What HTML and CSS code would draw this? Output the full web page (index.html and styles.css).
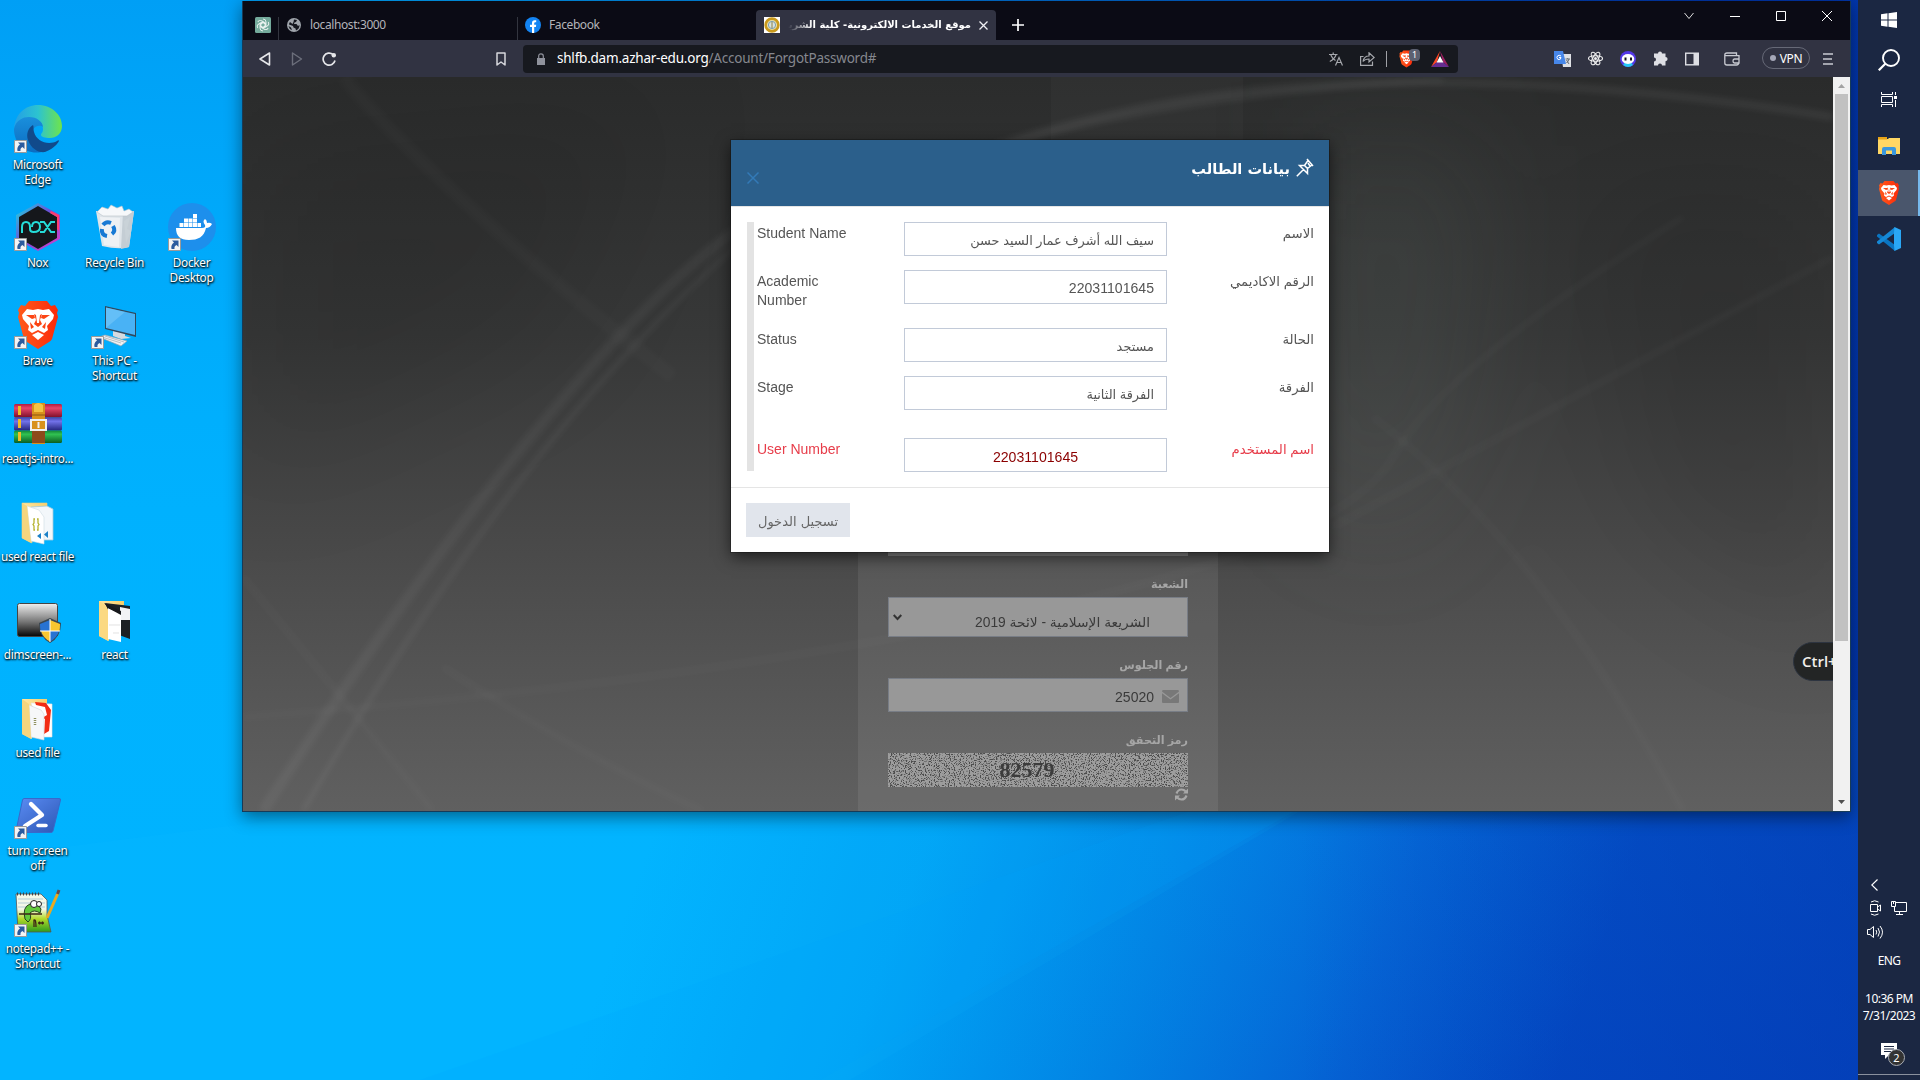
FILE: index.html
```html
<!DOCTYPE html>
<html lang="en">
<head>
<meta charset="utf-8">
<title>Desktop</title>
<link rel="stylesheet" href="styles.css">
</head>
<body>
<svg class="defs" width="0" height="0" aria-hidden="true">
  <defs>
    <linearGradient id="braveGrad" x1="0" x2="1"><stop offset="0" stop-color="#ff5a1c"/><stop offset="1" stop-color="#fb2a0a"/></linearGradient>
    <linearGradient id="folderGrad" x1="0" x2="1"><stop offset="0" stop-color="#ffe7a3"/><stop offset="1" stop-color="#f7cf6b"/></linearGradient>
    <symbol id="brave" viewBox="0 0 48 48">
      <path fill="url(#braveGrad)" d="M15 0H33L37 5 41 4 44 9 43 12 44 16 38 38Q37 40 35 41L24 48 13 41Q11 40 10 38L4 16 5 12 4 9 7 4 11 5Z"/>
      <path fill="#fff" d="M13 8 19 9 24 8 29 9 35 8 40 14 39 18 33 25 34 29 30 32 24 29 18 32 14 29 15 25 9 18 8 14ZM24 31 30 34 24 39 18 34Z"/>
      <path fill="#fc4413" d="M12 14 20 14 21 17 18 18ZM36 14 28 14 27 17 30 18ZM20 13 22 19 20 23 24 26 28 23 26 19 28 13 26 14 25 22H23L22 14ZM16 21 20 26 17 28ZM32 21 28 26 31 28Z"/>
    </symbol>
    <symbol id="shortcut" viewBox="0 0 13 13">
      <path fill="#f4f4f4" stroke="#9a9a9a" d="M.5.5H12.5V12.5H.5Z"/>
      <path fill="#2b5b9e" d="M4 2.500H10.500V9L8.500 7Q6 8 6.500 11H3.500Q2.500 7 6 4.500Z"/>
    </symbol>
  </defs>
</svg>

<svg class="wallpaper" viewBox="0 0 1920 1080" preserveAspectRatio="none" aria-hidden="true">
  <defs>
    <linearGradient id="wallBase" gradientUnits="userSpaceOnUse" x1="700" y1="700" x2="1580" y2="1010">
      <stop offset="0" stop-color="#00b4ff"/><stop offset=".28" stop-color="#00a4f6"/><stop offset=".55" stop-color="#0282e3"/><stop offset=".78" stop-color="#0562d4"/><stop offset="1" stop-color="#044bc6"/>
    </linearGradient>
    <linearGradient id="wallLeft" x1="0" y1="0" x2="0" y2="1"><stop offset="0" stop-color="#0098f2" stop-opacity=".75"/><stop offset=".5" stop-color="#00a8fb" stop-opacity=".2"/><stop offset="1" stop-color="#00a8fb" stop-opacity="0"/></linearGradient>
    <linearGradient id="wallTop" x1="0" x2="1"><stop offset=".2" stop-color="#0037a8" stop-opacity="0"/><stop offset=".9" stop-color="#0037a8"/></linearGradient>
    <linearGradient id="wallEnd" x1="0" x2="1"><stop offset="0" stop-color="#0030a8" stop-opacity="0"/><stop offset="1" stop-color="#0334ac" stop-opacity=".55"/></linearGradient>
  </defs>
  <path fill="url(#wallBase)" d="M0 0H1920V1080H0Z"/>
  <path fill="url(#wallLeft)" d="M0 0H1920V1080H0Z"/>
  <path fill="url(#wallTop)" d="M0 0H1920V700H0Z"/>
  <path fill="#1cc0ff" opacity=".08" d="M0 855 1300 690 1300 811 850 1080 0 1080Z"/>
  <path fill="#00a6ff" opacity=".14" d="M820 1080 1295 811H1190L420 1080Z"/>
  <path fill="url(#wallEnd)" d="M1300 0H1920V1080H1300Z"/>
</svg>

<main class="desktop-icons">
  <div class="shortcut c1 r1">
    <div class="art">
      <svg viewBox="0 0 48 48"><defs><linearGradient id="e1" x1="0" x2="1"><stop offset="0" stop-color="#249fe6"/><stop offset=".5" stop-color="#2cc3d0"/><stop offset="1" stop-color="#70e44a"/></linearGradient><linearGradient id="e2" x1="0" y1="0" x2="0" y2="1"><stop offset="0" stop-color="#1a8fdc"/><stop offset="1" stop-color="#0b6cc0"/></linearGradient></defs>
        <path fill="url(#e1)" d="M0 24C1 9 11 0 24 0 38 0 48 10 48 21 48 29 42 33 36 33 31 33 27 32 27 30 27 28 29 28 29 24 29 18 23 13 15 13 7 13 1 18 0 24Z"/>
        <path fill="url(#e2)" d="M0 24C2 15 9 12 15 12 23 12 29 17 29 22 27 20 21 20 19 25 15 35 24 45 31 46 14 52 0 40 0 24Z"/>
        <path fill="#114a8b" d="M19 20C14 23 12 29 14 35 17 44 25 48 31 47 37 45 43 40 45 36 45 35 44 35 43 36 34 41 22 36 20 27 19 24 20 22 19 20Z"/></svg>
      <svg class="arrow"><use href="#shortcut"/></svg>
    </div>
    <span>Microsoft<br>Edge</span>
  </div>
  <div class="shortcut c1 r2">
    <div class="art">
      <svg viewBox="0 0 48 48"><defs><linearGradient id="n1" x1="0" y1="0" x2="1" y2="1"><stop offset="0" stop-color="#18e0e0"/><stop offset=".45" stop-color="#6b52d8"/><stop offset="1" stop-color="#e239c8"/></linearGradient></defs>
        <path fill="url(#n1)" d="M24 0 46 12V36L24 48 2 36V12Z"/><path fill="#15171b" d="M24 3 43 14V35L24 46 5 35V14Z"/><path fill="#ff3c6e" d="M37 8 45 12V28L43 26V14L36 10Z"/>
        <path fill="none" stroke="#25dcd8" stroke-width="2" d="M8 30V24Q8 19 12 19 16 19 16 24V26Q16 29 19.500 29 26 29 26 24 26 19 22 19 18 19 18 24M26 19H30L37 29H41M41 19H37L30 29H26"/></svg>
      <svg class="arrow"><use href="#shortcut"/></svg>
    </div>
    <span>Nox</span>
  </div>
  <div class="shortcut c2 r2">
    <div class="art">
      <svg viewBox="0 0 48 48"><path fill="#dfe5ea" d="M5 8 43 8 38 44Q28 47 11 43Z"/><path fill="#c4cdd4" d="M32 9 43 8 38 44 30 46Z"/><path fill="#f6f8fa" stroke="#b9c1c8" stroke-width=".6" d="M6 9 11 4 17 6 20 2 26 5 31 3 33 8 38 6 42 9 36 13H12Z"/><path fill="#eef1f4" d="M9 14 29 15 28 44 13 42Z"/><path fill="#c9d2d8" d="M33 18 39 14 36 26 40 28 35 40Z"/>
        <g fill="none" stroke="#1779d4" stroke-width="4"><path d="M12 22Q15 18 20 20M22 23Q25 28 21 31M16 33Q10 32 11 26"/></g></svg>
    </div>
    <span>Recycle Bin</span>
  </div>
  <div class="shortcut c3 r2">
    <div class="art">
      <svg viewBox="0 0 48 48"><circle cx="24" cy="24" r="24" fill="#1d8fec"/><path fill="#fff" d="M8 25H34Q38 25 37 22 34 18 37 16 39 17 39 20 42 19 44 21 42 25 38 25C36 34 30 37 21 37 12 37 8 33 8 25Z"/><g fill="#fff"><path d="M11.500 20h4v4h-4zM16 20h4v4h-4zM20.500 20h4v4h-4zM25 20h4v4h-4zM29.500 20h3.500v4h-3.500zM16 15.500h4v4h-4zM20.500 15.500h4v4h-4zM25 15.500h4v4h-4zM25 11h4v4h-4z"/></g></svg>
      <svg class="arrow"><use href="#shortcut"/></svg>
    </div>
    <span>Docker<br>Desktop</span>
  </div>
  <div class="shortcut c1 r3">
    <div class="art"><svg><use href="#brave"/></svg><svg class="arrow"><use href="#shortcut"/></svg></div>
    <span>Brave</span>
  </div>
  <div class="shortcut c2 r3">
    <div class="art">
      <svg viewBox="0 0 48 48"><path fill="#d5dbe0" d="M22 30 34 32V35L40 37 30 38 22 35Z"/><path fill="#31485c" d="M14 5 45 12V36L14 28Z"/><path fill="#49b2f5" d="M15 6.500 44 13V34L15 27Z"/><path fill="#7fcbfa" d="M15 27V6.500L34 11Z" opacity=".5"/><path fill="#eef1f3" stroke="#9aa3aa" stroke-width=".7" d="M8 36 14 34 36 40 30 45Z"/><path stroke="#a9b1b7" stroke-width=".8" d="M11 36 30 42M14 35 33 41"/></svg>
      <svg class="arrow"><use href="#shortcut"/></svg>
    </div>
    <span>This PC -<br>Shortcut</span>
  </div>
  <div class="shortcut c1 r4">
    <div class="art">
      <svg viewBox="0 0 48 48"><defs><linearGradient id="w1" x1="0" y1="0" x2="0" y2="1"><stop offset="0" stop-color="#b01c40"/><stop offset=".3" stop-color="#e8466a"/><stop offset="1" stop-color="#7c0e2a"/></linearGradient><linearGradient id="w2" x1="0" y1="0" x2="0" y2="1"><stop offset="0" stop-color="#4444b0"/><stop offset=".3" stop-color="#7272e8"/><stop offset="1" stop-color="#25257c"/></linearGradient><linearGradient id="w3" x1="0" y1="0" x2="0" y2="1"><stop offset="0" stop-color="#128536"/><stop offset=".3" stop-color="#31c252"/><stop offset="1" stop-color="#0b5e24"/></linearGradient></defs>
        <rect y="5" width="48" height="13.500" rx="1.500" fill="url(#w1)"/><rect y="18.500" width="48" height="13" rx="1.500" fill="url(#w2)"/><rect y="31.500" width="48" height="12.500" rx="1.500" fill="url(#w3)"/>
        <path fill="#f2bc25" d="M4 7H7V16H4ZM4 20H7V29H4ZM4 33H7V42H4Z"/><path fill="#d8911c" d="M18 4H31V45H18Z"/><path fill="#8d4a1b" d="M18 31H31V44H18Z"/><path fill="#f4c343" d="M20 6Q24 2 29 6V13H20Z"/><path stroke="#8a5710" d="M18 16H31"/><path fill="none" stroke="#f0f0f0" stroke-width="2" d="M17 21H32V31H17ZM24.500 23V29"/></svg>
    </div>
    <span>reactjs-intro...</span>
  </div>
  <div class="shortcut c1 r5">
    <div class="art">
      <svg viewBox="0 0 48 48"><path fill="url(#folderGrad)" stroke="#e8cd83" stroke-width=".6" d="M8 6H33V10L18 12V46L8 41Z"/><path fill="#f3f7fa" stroke="#9fc8dc" stroke-width=".8" d="M17 10 33 9 39 12V43H28Z"/><path fill="#fff" stroke="#cfdbe2" stroke-width=".6" d="M13 9 25 13 30 20V47L17 44Z"/><path fill="#f5d57e" d="M8 6 13 9 17 46 8 41Z"/><path fill="none" stroke="#b5b32e" stroke-width="1.300" d="M21 22H20V26L19 27.500 20 29V33H21M23 22H24V26L25 27.500 24 29V33H23"/><path fill="#1b81c8" d="M27 36V42L23 39ZM34 34V41L30 37.500Z"/></svg>
    </div>
    <span>used react file</span>
  </div>
  <div class="shortcut c1 r6">
    <div class="art">
      <svg viewBox="0 0 48 48"><defs><linearGradient id="d1" x1="0" y1="0" x2="0" y2="1"><stop offset="0" stop-color="#efefef"/><stop offset=".55" stop-color="#777"/><stop offset="1" stop-color="#050505"/></linearGradient></defs>
        <rect x="3.500" y="8.500" width="40" height="33" rx="2" fill="url(#d1)" stroke="#444"/><path fill="#3a4650" d="M36 23 47 28Q47 42 36 48 25 42 25 28Z"/><path fill="#2873d2" d="M36 25V36H26.500Q26 33 26 29ZM36 36H45Q43 43 36 46.500Z"/><path fill="#f8c62f" d="M36 25 46 29Q46 33 45.500 36H36ZM27 36H36V46.500Q29 43 27 36Z"/><path stroke="#fff" d="M36 24V47M26 36H46"/></svg>
    </div>
    <span>dimscreen-...</span>
  </div>
  <div class="shortcut c2 r6">
    <div class="art">
      <svg viewBox="0 0 48 48"><path fill="url(#folderGrad)" d="M8 6H33V10L18 12V46L8 41Z"/><path fill="#1c1f23" d="M14 8 39 11V44L28 40Z"/><path fill="#f2f3f5" d="M29 12 39 14V25H29Z"/><path fill="#fff" d="M17 13 30 19V47L17 44Z"/><path fill="#17191c" d="M13 8 30 16V20L17 13Z"/><path fill="#fbd982" d="M8 6 13 9 17 15V46L8 41Z"/><path stroke="#d5d5d5" d="M18 30H29M22 38H28" stroke-width=".7"/></svg>
    </div>
    <span>react</span>
  </div>
  <div class="shortcut c1 r7">
    <div class="art">
      <svg viewBox="0 0 48 48"><path fill="url(#folderGrad)" d="M8 6H33V10L18 12V46L8 41Z"/><path fill="#fff" stroke="#e1e1e1" stroke-width=".6" d="M17 10 38 11V44H28Z"/><path fill="#f22c14" d="M21 9 32 10 37 17 35 38 30 41 31 26 28 25 33 22 31 14 22 12Z"/><path fill="#f6f7f9" stroke="#d7d7d7" stroke-width=".6" d="M15 12 27 17 30 21V47L17 44Z"/><path fill="#f5d57e" d="M8 6 15 11 17 46 8 41Z"/><path stroke="#8f9160" stroke-width="2.500" stroke-dasharray="1 1" d="M21 25V33"/></svg>
    </div>
    <span>used file</span>
  </div>
  <div class="shortcut c1 r8">
    <div class="art">
      <svg viewBox="0 0 48 48"><defs><linearGradient id="p1" x1="0" y1="0" x2="1" y2="1"><stop offset="0" stop-color="#5b8df4"/><stop offset="1" stop-color="#2c56b4"/></linearGradient></defs><path fill="url(#p1)" stroke="#3869cb" d="M10 7.500H45Q47 7.500 46.500 9L39 40Q38.500 41.500 37 41.500H3Q1.500 41.500 2 40L8.500 9Q9 7.500 10 7.500Z"/><path fill="none" stroke="#fff" stroke-width="4.300" stroke-linecap="round" stroke-linejoin="round" d="M17 13 28 24 11 35"/><path stroke="#fff" stroke-width="3.500" stroke-linecap="round" d="M24 34.500H32"/></svg>
      <svg class="arrow"><use href="#shortcut"/></svg>
    </div>
    <span>turn screen<br>off</span>
  </div>
  <div class="shortcut c1 r9">
    <div class="art">
      <svg viewBox="0 0 48 48"><defs><linearGradient id="np" x1="0" y1="0" x2="0" y2="1"><stop offset=".4" stop-color="#f4f8e8"/><stop offset=".65" stop-color="#b3d92a"/><stop offset="1" stop-color="#2e9b1c"/></linearGradient></defs><path fill="url(#np)" stroke="#555" stroke-width=".8" d="M2 5H27L33 11V26L37 43 4 43Z"/><path stroke="#444" stroke-width="3" stroke-dasharray="1 2" d="M3 5H26"/><path stroke="#9bbccb" stroke-width=".7" d="M4 10H29M4 14H31M4 18H31"/><path fill="#62c93c" stroke="#26401e" d="M11 30Q8 18 16 15 23 13 27 20L26 24Q20 20 16 24 18 30 14 33Z"/><circle cx="20" cy="15" r="3.500" fill="#fff" stroke="#222"/><circle cx="25" cy="15" r="2.500" fill="#fff" stroke="#222"/><path stroke="#3d2515" stroke-width="1.500" d="M5 25 28 25"/><path fill="none" stroke="#3d2515" stroke-width="1.300" d="M20 38V31Q22 30 22 38M24 34H30M25.500 32.500V35.500M28.500 32.500V35.500"/><path stroke="#e9a922" stroke-width="3" d="M44 4 33 29"/><path stroke="#6a4b49" stroke-width="3" d="M45 1 43.500 5"/></svg>
      <svg class="arrow"><use href="#shortcut"/></svg>
    </div>
    <span>notepad++ -<br>Shortcut</span>
  </div>
</main>

<section class="browser">
  <header class="tabstrip">
    <div class="tab tab-pinned">
      <svg width="16" height="16" viewBox="0 0 16 16"><rect width="16" height="16" rx="1.500" fill="#74aa9c"/><g fill="none" stroke="#eef5f3" stroke-width=".9"><path id="petal" d="M8 2Q11 2 11 5V9L8 10.500 5.500 9"/><use href="#petal" transform="rotate(60 8 8)"/><use href="#petal" transform="rotate(120 8 8)"/><use href="#petal" transform="rotate(180 8 8)"/><use href="#petal" transform="rotate(240 8 8)"/><use href="#petal" transform="rotate(300 8 8)"/></g></svg>
    </div>
    <div class="tab tab-local">
      <svg width="14" height="14" viewBox="0 0 14 14"><circle cx="7" cy="7" r="7" fill="#9fa4ab"/><path fill="#14161e" d="M7 1.500 10 2 9 4 7.500 4.500 7 6H9.500L11 8 12.500 7Q12.500 11 9 12.500L8.500 10.500 6.500 9.500 6 8 2 6.500Q2 5 3 4L5.500 6 6.500 4ZM1.500 8 4 9.500 5 12Q2 11 1.500 8Z"/></svg>
      <span class="t-local">localhost:3000</span>
    </div>
    <div class="tab tab-fb">
      <svg width="16" height="16" viewBox="0 0 16 16"><circle cx="8" cy="8" r="8" fill="#1384f3"/><path fill="#fff" d="M7 16V10H5V7.800H7V6Q7 3.300 9.700 3.300H11.200V5.300H10.200Q9.200 5.300 9.200 6.300V7.800H11.200L10.900 10H9.200V16Z"/></svg>
      <span class="t-fb">Facebook</span>
    </div>
    <div class="tab tab-active">
      <svg width="16" height="16" viewBox="0 0 16 16"><path fill="#fff" d="M0 0H16V16H0Z"/><circle cx="8" cy="8" r="6.400" fill="#e6dca8" stroke="#c99a1c" stroke-width="2.600"/><circle cx="8" cy="8" r="3.600" fill="#d9e3df" stroke="#7d9eae"/><path stroke="#8a8048" d="M8 5V11"/></svg>
      <span class="tab-title" dir="rtl">موقع الخدمات الالكترونية- كلية الشريـ</span>
      <svg width="9" height="9" viewBox="0 0 9 9"><path stroke="#f0f0f3" stroke-width="1.300" d="M.5.5 8.500 8.500M8.500.5.5 8.500"/></svg>
    </div>
    <svg class="newtab" width="12" height="12" viewBox="0 0 12 12"><path stroke="#fff" stroke-width="1.700" d="M6 0V12M0 6H12"/></svg>
    <div class="controls">
      <span><svg width="10" height="10" viewBox="0 0 10 10"><path fill="none" stroke="#ddd" d="M.5 2 5 7.500 9.500 2"/></svg></span>
      <span><svg width="10" height="10" viewBox="0 0 10 10"><path stroke="#fff" d="M0 5.500H10"/></svg></span>
      <span><svg width="10" height="10" viewBox="0 0 10 10"><path fill="none" stroke="#fff" d="M.5.5H9.500V9.500H.5Z"/></svg></span>
      <span><svg width="10" height="10" viewBox="0 0 10 10"><path stroke="#fff" d="M0 0 10 10M10 0 0 10"/></svg></span>
    </div>
  </header>

  <div class="toolbar">
    <div class="nav">
      <svg width="12" height="14" viewBox="0 0 12 14"><path fill="none" stroke="#e6e7ea" stroke-width="1.600" stroke-linejoin="round" d="M10.500 1V13L1 7Z"/></svg>
      <svg width="12" height="14" viewBox="0 0 12 14"><path fill="none" stroke="#6c6f7b" stroke-width="1.400" stroke-linejoin="round" d="M1.500 1V13L10.500 7Z"/></svg>
      <svg width="14" height="14" viewBox="0 0 14 14"><path fill="none" stroke="#e6e7ea" stroke-width="1.700" d="M11 2.500A6 6 0 1 0 13 8.500"/><circle cx="11.800" cy="3.200" r="2.200" fill="#e6e7ea"/></svg>
    </div>
    <svg class="bookmark" width="10" height="14" viewBox="0 0 10 14"><path fill="none" stroke="#d6d7dc" stroke-width="1.500" stroke-linejoin="round" d="M1 1H9V13L5 10 1 13Z"/></svg>
    <div class="address">
      <svg class="lock" width="8" height="12" viewBox="0 0 8 12"><path fill="#8f929c" d="M0 5H8V12H0Z"/><path fill="none" stroke="#8f929c" stroke-width="1.200" d="M1.700 5V3Q1.700.8 4 .8T6.300 3V5"/></svg>
      <span class="url"><b>shlfb.dam.azhar-edu.org</b>/Account/ForgotPassword#</span>
      <div class="address-actions">
        <svg width="14" height="14" viewBox="0 0 14 14"><path fill="none" stroke="#a6a8ad" stroke-width="1.200" d="M0 2.500H8.500M4.200.5V2.500M7 3Q5.500 7 .8 9.500M1.800 3Q3.500 7 6.500 8.500M6.500 13.500 10 5.500 13.500 13.500M8 10.500H12"/></svg>
        <svg class="share" width="15" height="14" viewBox="0 0 15 14"><path fill="none" stroke="#a6a8ad" stroke-width="1.200" d="M3.500 4.500H.6V13.400H12.500V9.500M3 9.500Q4 4 9 4V.8L14.200 5.500 9 10V7Q5 7 3 9.500Z"/></svg>
        <i class="rule"></i>
        <span class="shields"><svg width="17" height="18"><use href="#brave"/></svg><em>1</em></span>
        <svg width="18" height="16" viewBox="0 0 18 16"><path fill="#ff4724" d="M9 0 0 16 6 11Z"/><path fill="#9e1f63" d="M9 0 18 16 12 11Z"/><path fill="#662d91" d="M0 16H18L12 11H6Z"/><path fill="#fff" d="M9 5 12.500 11.500H5.500Z"/></svg>
      </div>
    </div>
    <div class="extensions">
      <svg width="17" height="16" viewBox="0 0 17 16"><path fill="#dfe1e5" d="M7 3H17V16H9Z"/><path fill="#4787ea" d="M0 0H9L12 13H0Z"/><path stroke="#687078" d="M11.500 8H16M13.700 7V8M15 8Q14 11 12.500 12M12.500 9 15 13"/><path fill="none" stroke="#fff" d="M7 5Q5 3.500 3.500 5T4 8.500Q7 9 7 6.500H5"/></svg>
      <svg width="15" height="15" viewBox="0 0 15 15"><g fill="none" stroke="#f0f0f0" stroke-width="1.100"><ellipse cx="7.500" cy="7.500" rx="7" ry="2.700"/><ellipse cx="7.500" cy="7.500" rx="7" ry="2.700" transform="rotate(60 7.500 7.500)"/><ellipse cx="7.500" cy="7.500" rx="7" ry="2.700" transform="rotate(120 7.500 7.500)"/></g><circle cx="7.500" cy="7.500" r="1.500" fill="#f0f0f0"/></svg>
      <svg width="16" height="16" viewBox="0 0 16 16"><circle cx="8" cy="8" r="8" fill="#5438e8"/><path fill="#26c8f5" d="M3 14Q8 18 13 14L11 11H5Z"/><ellipse cx="8" cy="8" rx="6.300" ry="5" fill="#fff"/><path fill="#17181c" d="M4.500 6.500h2v3h-2zM10 6.500h2v3h-2z"/></svg>
      <svg width="15" height="15" viewBox="0 0 15 15"><path fill="#dedfe4" d="M5 2.500A2 2 0 0 1 9 2.500H12.500V6A2 2 0 0 1 12.500 10.200V14.500H9A2 2 0 0 0 5 14.500H1V10.500A2 2 0 0 0 1 6.500V2.500Z"/></svg>
      <svg width="14" height="14" viewBox="0 0 14 14"><rect x=".7" y="1.200" width="12.600" height="11.600" fill="none" stroke="#dedfe4" stroke-width="1.400"/><path fill="#dedfe4" d="M8.500 1H13V13H8.500Z"/></svg>
      <svg class="wallet" width="16" height="14" viewBox="0 0 16 14"><path fill="none" stroke="#c9cbd2" stroke-width="1.300" d="M12.500 3.500V1H3Q.8 1 .8 3M15 7V3.700H.8V11Q.8 13 3 13H12.500Q14.500 13 14.500 11M15 7H10.500Q9 7 9 9T10.500 11H15Z"/></svg>
      <span class="vpn"><i></i>VPN</span>
      <svg class="menu" width="10" height="12" viewBox="0 0 10 12"><path stroke="#c9cbd2" stroke-width="1.600" d="M0 1H10M0 6H9M0 11H10"/></svg>
    </div>
  </div>

  <div class="viewport">
    <div class="page">
      <svg class="page-bg" viewBox="0 0 1590 734" preserveAspectRatio="none" aria-hidden="true">
        <defs>
          <filter id="soft" x="-20%" y="-20%" width="140%" height="140%"><feGaussianBlur stdDeviation="3"/></filter>
          <filter id="haze" x="-50%" y="-50%" width="200%" height="200%" color-interpolation-filters="sRGB"><feGaussianBlur stdDeviation="60"/></filter>
        </defs>
        <g filter="url(#haze)">
          <path fill="#000" opacity=".1" d="M0 60 420 20 300 260 0 400Z"/>
          <path fill="#8fa79f" opacity=".09" d="M1060 60 1240 70 1220 330 1150 470 1060 400Z"/>
          <path fill="#000" opacity=".1" d="M1330 100H1590V560L1400 430Z"/>
        </g>
        <g fill="none" stroke="#fff" filter="url(#soft)">
          <path stroke-width="10" opacity=".05" d="M20 734Q190 470 330 310T540 130"/>
          <path stroke-width="3" opacity=".09" d="M60 734Q230 440 390 270T590 120"/>
          <path stroke-width="3" opacity=".05" d="M0 640Q420 610 760 540T1150 380 1440 140"/>
          <path stroke-width="4" opacity=".04" d="M0 500Q90 610 190 734M200 590Q340 680 460 734"/>
          <path stroke-width="7" opacity=".07" d="M750 70Q930 10 1140 6T1590 40"/>
          <path stroke-width="2" opacity=".12" d="M740 76Q900 22 1200 2"/>
          <path stroke-width="4" opacity=".04" d="M1130 340Q1300 470 1440 734M1090 450 1590 180"/>
          <path stroke-width="14" opacity=".02" d="M100 0Q200 120 430 300"/>
        </g>
        <path fill="#fff" opacity=".025" d="M808 0H1000V70H808Z"/>
      </svg>

      <form class="login" dir="rtl">
        <div class="field-end"></div>
        <label>الشعبة</label>
        <div class="select"><span>الشريعة الإسلامية - لائحة 2019</span>
          <svg width="9" height="7" viewBox="0 0 9 7"><path fill="none" stroke="#333" stroke-width="2" d="M.7 1 4.500 5 8.300 1"/></svg></div>
        <label>رقم الجلوس</label>
        <div class="input-icon">
          <svg width="17" height="13" viewBox="0 0 17 13"><path fill="#787878" d="M1 0H16Q17 0 17 1.500L8.500 8 0 1.500Q0 0 1 0ZM0 3.200 8.500 9.500 17 3.200V12Q17 13 16 13H1Q0 13 0 12Z"/></svg>
          <span>25020</span></div>
        <label>رمز التحقق</label>
        <div class="captcha">
          <svg width="300" height="34" aria-hidden="true"><filter id="noise" x="0" y="0" width="100%" height="100%" color-interpolation-filters="sRGB"><feTurbulence type="fractalNoise" baseFrequency=".8" numOctaves="3" seed="4"/><feColorMatrix values="0 0 0 0 .22  0 0 0 0 .22  0 0 0 0 .22  7 0 0 0 -3.600"/></filter><rect width="300" height="34" filter="url(#noise)" opacity=".8"/></svg>
          <b>82579</b></div>
        <svg class="refresh" width="13" height="13" viewBox="0 0 13 13"><path fill="none" stroke="#a8a8a8" stroke-width="2.200" d="M1.500 5.500Q3 1.500 6.500 1.500 9 1.500 10.800 3.500M11.500 7.500Q10 11.500 6.500 11.500 4 11.500 2.200 9.500"/><path fill="#a8a8a8" d="M13 .5V5.500H8ZM0 12.500V7.500H5Z"/></svg>
      </form>

      <div class="hint">Ctrl+</div>

      <section class="modal" dir="rtl">
        <header>
          <h4><svg width="18" height="19" viewBox="0 0 18 19"><path fill="none" stroke="#fff" stroke-width="1.500" d="M11 1 17 8M12 2.500 8.500 7.500H3.500L11.500 15.500V10.500L16 7M7.500 11.500.8 18.300M8.500 7.500 11.500 10.500M12 5 14 8"/></svg><span>بيانات الطالب</span></h4>
          <svg class="close" width="12" height="12" viewBox="0 0 12 12"><path stroke="#337ab7" stroke-width="1.500" d="M.5.5 11.500 11.500M11.500.5.5 11.500"/></svg>
        </header>
        <div class="body">
          <div class="rows">
            <div class="row"><span class="ar">الاسم</span><span class="box">سيف الله أشرف عمار السيد حسن</span><span class="en">Student Name</span></div>
            <div class="row tall"><span class="ar">الرقم الاكاديمي</span><span class="box num">22031101645</span><span class="en">Academic<br>Number</span></div>
            <div class="row"><span class="ar">الحالة</span><span class="box">مستجد</span><span class="en">Status</span></div>
            <div class="row spaced"><span class="ar">الفرقة</span><span class="box">الفرقة الثانية</span><span class="en">Stage</span></div>
            <div class="row user"><span class="ar">اسم المستخدم</span><span class="box num">22031101645</span><span class="en">User Number</span></div>
          </div>
        </div>
        <footer><button type="button">تسجيل الدخول</button></footer>
      </section>
    </div>
    <div class="scrollbar">
      <svg width="17" height="17" viewBox="0 0 17 17"><path fill="#a3a3a3" d="M5 11 8.500 7 12 11Z"/></svg>
      <i></i>
      <svg width="17" height="17" viewBox="0 0 17 17"><path fill="#505050" d="M5 6 8.500 10 12 6Z"/></svg>
    </div>
  </div>
</section>

<aside class="taskbar">
  <div class="apps">
    <span class="app start"><svg width="16" height="16" viewBox="0 0 16 16"><path fill="#fff" d="M0 2.300 6.500 1.300V7.500H0ZM7.500 1.200 16 0V7.500H7.500ZM0 8.500H6.500V14.700L0 13.700ZM7.500 8.500H16V16L7.500 14.800Z"/></svg></span>
    <span class="app find"><svg width="22" height="22" viewBox="0 0 22 22"><circle cx="13" cy="9" r="8" fill="none" stroke="#fff" stroke-width="1.900"/><path stroke="#fff" stroke-width="2.200" d="M7.500 14.500.8 21.300"/></svg></span>
    <span class="app view"><svg width="16" height="15" viewBox="0 0 16 15"><path fill="none" stroke="#fff" d="M.5 0V2.500H11.500V0M.5 15V12.500H11.500V15M.5 4.500H11.500V10.500H.5ZM14.500 0V3M14.500 8V15"/><path fill="#fff" d="M13 4H16V7H13Z"/></svg></span>
    <span class="app files"><svg width="22" height="18" viewBox="0 0 22 18"><path fill="#ffd764" d="M0 2H10L11 1H22V17H0Z"/><path fill="#e8a317" d="M0 0H9V2.500H0Z"/><path fill="#3a97dd" d="M4 18V12Q4 10 6 10H16Q18 10 18 12V18H14V13.500H8V18Z"/></svg></span>
    <span class="app active"><svg width="24" height="24"><use href="#brave"/></svg></span>
    <span class="app"><svg width="24" height="24" viewBox="0 0 24 24"><path fill="#0a75c2" d="M0 8 2 6.500 18 18V24L0 9.500Z"/><path fill="#1588d6" d="M0 16 2 17.500 18 6V0L0 14.500Z"/><path fill="#2aa7f5" d="M17.500 0 24 3V21L17.500 24 17 18.500V5.500Z"/></svg></span>
  </div>
  <div class="tray">
    <svg class="up" width="7" height="12" viewBox="0 0 7 12"><path fill="none" stroke="#fff" stroke-width="1.200" d="M6.500.5.8 6 6.500 11.500"/></svg>
    <div class="tray-row"><svg width="11" height="16" viewBox="0 0 11 16"><path fill="none" stroke="#fff" d="M.5 4.500H7.500V11.500H.5ZM7.500 7 10.500 5V11L7.500 9M1 2Q4.500-.5 8.500 2M1 14Q4.500 16.500 8.500 14"/></svg><svg width="16" height="14" viewBox="0 0 16 14"><path fill="none" stroke="#fff" d="M5 1.500H15.500V10.500H3.500V6M.5.5H4.500V5.500H.5ZM8.500 10.500V13.500M5 13.500H12M2.500 0V3"/></svg></div>
    <svg class="volume" width="17" height="14" viewBox="0 0 17 14"><path fill="none" stroke="#fff" d="M.5 4.500H3L6.500 1.500V12.500L3 9.500H.5ZM9 5Q10.500 7 9 9.500M11 3Q14 7 11 11.500M13 1Q18 7 13 13.500"/></svg>
    <span class="lang">ENG</span>
    <span class="clock">10:36 PM<br>7/31/2023</span>
    <div class="notes"><svg width="16" height="16" viewBox="0 0 16 16"><path fill="#fff" d="M0 0H16V12H8L4 16V12H0Z"/><path stroke="#1b2742" d="M3 3.500H13M3 6H13M3 8.500H10"/></svg><em>2</em></div>
  </div>
  <i class="peek"></i>
</aside>
</body>
</html>
```
FILE: styles.css
```css
* { box-sizing: border-box; }

body {
  margin: 0;
  width: 1920px;
  height: 1080px;
  position: relative;
  overflow: hidden;
  font-family: "Noto Sans", "DejaVu Sans", sans-serif;
  background: #00aefc;
}

svg { display: block; flex: none; }
em, i { font-style: normal; }
.defs { position: absolute; }
.wallpaper { position: absolute; inset: 0; width: 1920px; height: 1080px; }

/* Desktop icons */
.desktop-icons {
  position: absolute;
  left: -1px;
  top: 105px;
  display: grid;
  grid-template-columns: repeat(3, 77px);
  grid-template-rows: repeat(9, 98px);
}
.shortcut { display: flex; flex-direction: column; align-items: center; gap: 4px; }
.shortcut span {
  color: #fff;
  font-size: 11.8px;
  line-height: 15px;
  letter-spacing: -.3px;
  text-align: center;
  white-space: nowrap;
  text-shadow: 0 1px 2px #000, 1px 1px 2px rgba(0, 0, 0, .8);
}
.art { position: relative; width: 48px; height: 48px; }
.art svg { width: 48px; height: 48px; }
.art .arrow { position: absolute; left: 0; bottom: 0; width: 13px; height: 13px; }
.c1 { grid-column: 1; } .c2 { grid-column: 2; } .c3 { grid-column: 3; }
.r1 { grid-row: 1; } .r2 { grid-row: 2; } .r3 { grid-row: 3; }
.r4 { grid-row: 4; } .r5 { grid-row: 5; } .r6 { grid-row: 6; }
.r7 { grid-row: 7; } .r8 { grid-row: 8; } .r9 { grid-row: 9; }

/* Browser window */
.browser {
  position: absolute;
  left: 242px;
  top: 1px;
  width: 1609px;
  height: 811px;
  display: flex;
  flex-direction: column;
  border: 1px solid #173b58;
  border-top-width: 0;
  box-shadow: 0 5px 16px rgba(0, 0, 0, .45);
}
.tabstrip { display: flex; height: 39px; background: #0b0b15; }
.tab { display: flex; align-items: center; color: #b3b4b9; font-size: 12px; padding-top: 8px; }
.tab-pinned { width: 36px; padding-left: 12px; }
.tab-local { width: 239px; padding-left: 8px; gap: 9px; }
.tab-fb { width: 238px; padding-left: 7px; gap: 8px; }
.tab-pinned, .tab-local { background: linear-gradient(#33353f, #33353f) right 16px / 1px 23px no-repeat; }
.t-local { letter-spacing: -.4px; }
.t-fb { letter-spacing: -.4px; }
.tab-active {
  width: 240px;
  height: 30px;
  margin-top: 9px;
  padding: 0 8px;
  gap: 8px;
  border-radius: 4px 4px 0 0;
  background: #313342;
  color: #fff;
}
.tab-title {
  flex: 1;
  height: 22px;
  overflow: hidden;
  white-space: nowrap;
  font: bold 10px/22px "DejaVu Sans", sans-serif;
  -webkit-mask-image: linear-gradient(90deg, transparent, #000 24px);
  mask-image: linear-gradient(90deg, transparent, #000 24px);
}
.newtab { margin: 18px 0 0 16px; }
.controls { display: flex; margin-left: auto; height: 30px; }
.controls span { width: 46px; display: flex; align-items: center; justify-content: center; }

.toolbar { display: flex; align-items: center; height: 37px; background: #313342; }
.nav { display: flex; gap: 19px; padding-left: 16px; }
.nav svg:nth-child(2) { margin-left: 1px; }
.bookmark { margin-left: 160px; }
.address {
  display: flex;
  align-items: center;
  width: 935px;
  height: 28px;
  margin-left: 17px;
  padding: 0 9px 0 14px;
  border-radius: 4px;
  background: #17191f;
}
.url { margin: -2px 0 0 12px; color: #85878e; font-size: 13.5px; letter-spacing: -.22px; }
.url b { color: #fff; font-weight: 400; }
.address-actions { display: flex; align-items: center; margin-left: auto; }
.share { margin-left: 17px; }
.rule { width: 1px; height: 16px; margin: 0 11px; background: #a0a1a6; }
.shields { position: relative; margin-right: 16px; }
.shields em {
  position: absolute;
  left: 11px;
  top: -1px;
  width: 11px;
  height: 12px;
  border-radius: 4px;
  background: #5c6070;
  color: #fff;
  font-size: 9px;
  line-height: 12px;
  text-align: center;
}
.extensions { display: flex; align-items: center; gap: 17px; margin-left: auto; padding-right: 17px; }
.wallet { margin-left: 8px; }
.vpn {
  display: flex;
  align-items: center;
  justify-content: center;
  gap: 4px;
  width: 48px;
  height: 22px;
  margin: -1px 0 0 5px;
  border: 1px solid #666977;
  border-radius: 11px;
  color: #fff;
  font-size: 12px;
  letter-spacing: -.3px;
}
.vpn i { width: 6px; height: 6px; border-radius: 50%; background: #a5a8b8; }
.menu { margin-left: -4px; }

.viewport { display: flex; flex: 1; min-height: 0; }
.page {
  position: relative;
  display: flow-root;
  flex: 1;
  overflow: hidden;
  background: linear-gradient(#2b2c2c 0, #373838 35%, #4a4a4a 65%, #606060 100%);
}
.page-bg { position: absolute; inset: 0; width: 1590px; height: 734px; }
.scrollbar { display: flex; flex-direction: column; width: 17px; background: #f1f1f1; }
.scrollbar i { width: 13px; height: 547px; margin: 0 2px auto; background: #c1c1c1; }

/* Login panel */
.login {
  position: relative;
  width: 360px;
  height: 534px;
  margin: 200px 0 0 615px;
  padding: 275px 30px 0;
  background: rgba(255, 255, 255, .075);
  color: #3a3a3a;
  font: 14px/20px "Liberation Sans", "DejaVu Sans", sans-serif;
}
.field-end { height: 4px; background: #858585; }
.login label {
  display: block;
  height: 20px;
  margin: 17px 0 4px;
  color: #a6a6a6;
  font-size: 11.2px;
  font-weight: bold;
  line-height: 22px;
  white-space: nowrap;
}
.select, .input-icon { display: flex; align-items: center; background: #989898; border: 1px solid #787d86; }
.select { height: 40px; padding: 11px 37px 0 4px; justify-content: space-between; font-size: 13.8px; }
.select span { white-space: nowrap; }
.select svg { margin-top: -10px; }
.input-icon { height: 34px; padding: 3px 8px 0; gap: 8px; }
.captcha { position: relative; display: flex; height: 34px; align-items: center; justify-content: center; background: #9d9d9d; }
.captcha svg { position: absolute; inset: 0; }
.captcha b { position: relative; right: 11px; font: bold 22px/30px "Liberation Serif", serif; color: #3c3c3c; }
.refresh { margin-top: 1px; }

.hint {
  position: absolute;
  left: 1550px;
  top: 565px;
  width: 80px;
  height: 39px;
  padding-left: 8px;
  border-radius: 20px;
  border: 1px solid #2d3440;
  background: #232525;
  color: #f1efeb;
  font: 600 15px/37px "Open Sans", sans-serif;
}

/* Student modal */
.modal {
  position: absolute;
  left: 488px;
  top: 63px;
  width: 598px;
  height: 412px;
  display: flex;
  flex-direction: column;
  background: #fff;
  box-shadow: 0 5px 15px rgba(0, 0, 0, .6), 0 0 0 1px rgba(0, 0, 0, .25);
  color: #555;
  font: 14px/19px "Liberation Sans", "DejaVu Sans", sans-serif;
}
.modal header {
  display: flex;
  justify-content: space-between;
  height: 67px;
  padding: 15px 15px 0 16px;
  border-bottom: 1px solid #e5e5e5;
  background: #2b5f8b;
}
.modal h4 { display: flex; gap: 6px; margin: 0; color: #fff; font: bold 14.6px/28px "DejaVu Sans", sans-serif; }
.modal h4 svg { margin-top: 3px; }
.close { margin-top: 17px; }
.body { height: 280px; padding: 15px 15px 0 16px; }
.rows { height: 249px; border-left: 7px solid #e3e3e3; }
.row { display: grid; grid-template-columns: 147px 263px 147px; height: 48px; }
.row.tall { height: 58px; }
.row.spaced { height: 62px; }
.row .ar { padding-top: 2px; font-size: 13.3px; white-space: nowrap; }
.row .box {
  height: 34px;
  border: 1px solid #c2cad8;
  padding: 8px 12px 0;
  font-size: 12.9px;
  white-space: nowrap;
}
.row .num { font-size: 14.1px; }
.row .en { direction: ltr; width: 93px; padding-top: 2px; justify-self: end; }
.user { color: #e73d4a; }
.user .box { color: #8b0000; text-align: center; padding: 9px 18px 0 18px; }
.modal footer { height: 65px; padding: 15px; border-top: 1px solid #e5e5e5; text-align: left; }
.modal button {
  width: 104px;
  height: 34px;
  padding: 3px 0 0;
  border: 0;
  background: #e1e5ec;
  color: #666;
  font: 13px "DejaVu Sans", sans-serif;
  white-space: nowrap;
}

/* Taskbar */
.taskbar {
  position: absolute;
  right: 0;
  top: 0;
  width: 62px;
  height: 1080px;
  display: flex;
  flex-direction: column;
  background: #1b2742;
  color: #fff;
}
.app { display: flex; height: 46px; align-items: center; justify-content: center; }
.start, .find { height: 40px; }
.view { height: 39px; }
.files { height: 51px; padding-top: 2px; }
.app.active { background: #4a566c; border-right: 2px solid #76b9ed; padding-left: 2px; }
.tray { display: flex; flex-direction: column; align-items: center; margin-top: auto; }
.up { align-self: flex-start; margin-left: 13px; }
.tray-row { display: flex; align-items: center; gap: 10px; margin: 9px 2px 0 0; }
.volume { align-self: flex-start; margin: 9px 0 0 9px; }
.lang { margin-top: 14px; font-size: 12px; line-height: 16px; letter-spacing: -.6px; }
.clock { margin-top: 21px; font-size: 12px; line-height: 17px; letter-spacing: -.5px; text-align: center; }
.notes { position: relative; margin-top: 19px; }
.notes em {
  position: absolute;
  left: 7px;
  top: 6px;
  width: 17px;
  height: 17px;
  border: 1px solid #a9adb5;
  border-radius: 50%;
  background: #333;
  font-size: 11px;
  line-height: 15px;
  text-align: center;
}
.peek { height: 6px; margin-top: 15px; border-top: 1px solid #8a909d; }
```
